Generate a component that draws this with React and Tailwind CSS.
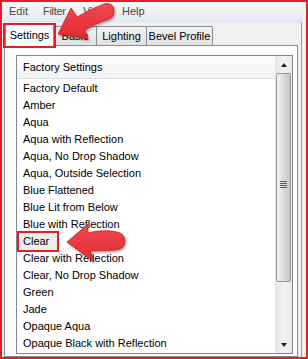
import React from "react";

const items = [
	"Factory Default",
	"Amber",
	"Aqua",
	"Aqua with Reflection",
	"Aqua, No Drop Shadow",
	"Aqua, Outside Selection",
	"Blue Flattened",
	"Blue Lit from Below",
	"Blue with Reflection",
	"Clear",
	"Clear with Reflection",
	"Clear, No Drop Shadow",
	"Green",
	"Jade",
	"Opaque Aqua",
	"Opaque Black with Reflection",
];

function Tab({ text, width }) {
	return (
		<div
			className={`${width} h-[19px] -ml-px flex items-center justify-center border border-b-0 border-[#898c95] bg-gradient-to-b from-[#f5f5f5] to-[#e1e1e1] rounded-t-[2px]`}
		>
			{text}
		</div>
	);
}

function ScrollBar() {
	return (
		<div className="w-[17px] flex flex-col bg-gradient-to-r from-[#e6e6e6] via-[#f2f2f2] to-[#ebebeb]">
			{/* up button */}
			<div className="h-[17px] flex items-center justify-center">
				<div className="w-0 h-0 border-x-[3.5px] border-x-transparent border-b-[4px] border-b-[#222]" />
			</div>
			{/* thumb */}
			<div className="h-[209px] mx-[1px] rounded-[2px] border border-[#979797] bg-gradient-to-r from-[#f3f3f3] via-[#dcdcdf] to-[#c3c3c8] flex items-center justify-center">
				<div className="flex flex-col gap-[1px] mb-[-14px]">
					<div className="w-[7px] h-px bg-[#5e5e5e]" />
					<div className="w-[7px] h-px bg-[#5e5e5e]" />
					<div className="w-[7px] h-px bg-[#5e5e5e]" />
					<div className="w-[7px] h-px bg-[#5e5e5e]" />
				</div>
			</div>
			<div className="flex-1" />
			{/* down button */}
			<div className="h-[17px] flex items-center justify-center">
				<div className="w-0 h-0 border-x-[3.5px] border-x-transparent border-t-[4px] border-t-[#222]" />
			</div>
		</div>
	);
}

function Arrows() {
	return (
		<svg
			className="absolute inset-0 pointer-events-none"
			width="308"
			height="359"
			viewBox="0 0 308 359"
		>
			<defs>
				<filter id="sh" x="-20%" y="-20%" width="140%" height="140%">
					<feDropShadow dx="1" dy="1.5" stdDeviation="1.2" floodColor="#000" floodOpacity="0.35" />
				</filter>
				<linearGradient id="rg" x1="0" y1="0" x2="0" y2="1">
					<stop offset="0" stopColor="#f04a4f" />
					<stop offset="1" stopColor="#e02a31" />
				</linearGradient>
			</defs>
			{/* arrow to Settings tab */}
			<path
				d="M58,34 L71,8 L77,17 Q90,9 104,4 Q113,2 114,10 Q115,18 106,20 Q94,24 85,30 L88,39 Z"
				fill="url(#rg)"
				stroke="#c81f26"
				strokeWidth="0.8"
				filter="url(#sh)"
			/>
			{/* arrow to Clear */}
			<path
				d="M67,242 L88,224 L87,233 Q104,229 117,232 Q125,234 125,241 Q125,249 116,250 Q104,251 90,251 L94,262 Z"
				fill="url(#rg)"
				stroke="#c81f26"
				strokeWidth="0.8"
				filter="url(#sh)"
			/>
		</svg>
	);
}

export default function App() {
	return (
		<div className="w-[308px] h-[359px] relative overflow-hidden bg-white border-2 border-[#e31e24] font-['Liberation_Sans',Arial,sans-serif] text-[11px] text-black">
			<div className="h-full flex flex-col bg-[#f0f0f0] border-r-[4px] border-r-[#f0f0f0] shadow-[inset_-5px_0_0_-4px_#a0a0a0]">
				{/* Menu bar */}
				<div className="h-[19px] flex items-center pl-[7px] text-[#4a4a4a] bg-gradient-to-b from-[#f8f9fb] to-[#e4e9f1]">
					<div className="w-[34px]">Edit</div>
					<div className="w-[40px] tracking-[-0.3px]">Filter</div>
					<div className="w-[39px]">View</div>
					<div>Help</div>
				</div>
				{/* Tabs */}
				<div className="h-[24px] flex items-end pl-[3px] border-t border-[#dfe4eb]">
					<div className="w-[49px] h-[23px] -mb-px relative z-10 flex items-center justify-center border border-b-0 border-[#898c95] bg-white rounded-t-[2px]">
						Settings
					</div>
					<Tab text="Basic" width="w-[44px]" />
					<Tab text="Lighting" width="w-[51px]" />
					<Tab text="Bevel Profile" width="w-[67px]" />
				</div>
				{/* Panel */}
				<div className="ml-[2px] w-[294px] flex-1 border border-[#898c95] bg-white pl-[11px] pt-[9px]">
					<div className="w-[277px] h-[299px] border border-[#828790] bg-white flex">
						<div className="flex-1 flex flex-col">
							<div className="h-[23px] flex items-center pl-[6px] bg-gradient-to-b from-[#fbfbfb] to-[#f1f2f4] border-b border-[#dadce0]">
								Factory Settings
							</div>
							<div className="pt-px">
								{items.map((item) => (
									<div key={item} className="h-[17px] leading-[17px] pl-[6px] whitespace-nowrap">
										{item === "Clear" ? (
											<span className="inline-block -ml-[4px] pl-[4px] w-[39px] bg-[#eeeeee]">{item}</span>
										) : (
											item
										)}
									</div>
								))}
							</div>
						</div>
						<ScrollBar />
					</div>
				</div>
			</div>
			{/* Annotation boxes */}
			<div className="absolute left-[1px] top-[21px] w-[53px] h-[25px] border-2 border-[#e31e24] z-20" />
			<div className="absolute left-[15px] top-[229px] w-[42px] h-[21px] border-2 border-[#e31e24] z-20" />
			<div className="absolute inset-0 z-30 -m-[2px]">
				<Arrows />
			</div>
		</div>
	);
}
